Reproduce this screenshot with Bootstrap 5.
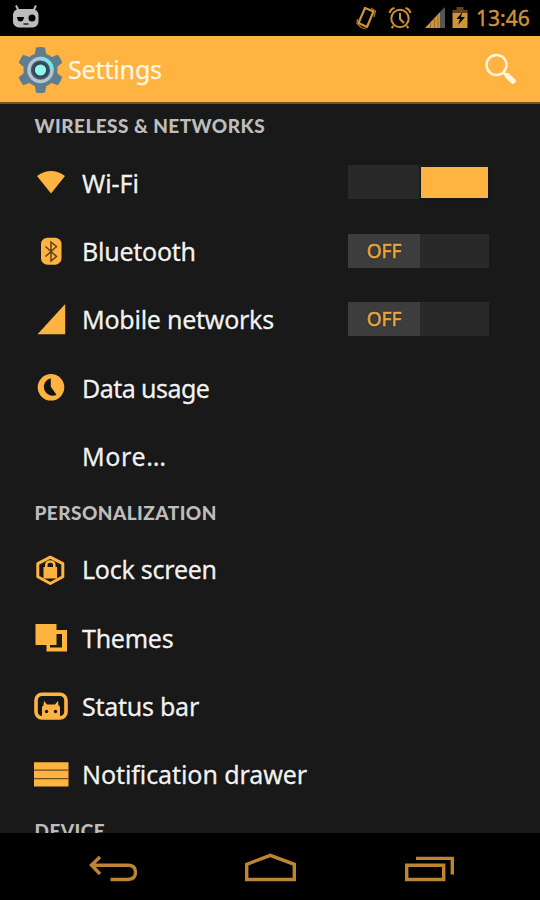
<!DOCTYPE html>
<html lang="en">
<head>
<meta charset="utf-8">
<meta name="viewport" content="width=device-width, initial-scale=1">
<title>Settings</title>
<link href="https://cdn.jsdelivr.net/npm/bootstrap@5.3.0/dist/css/bootstrap.min.css" rel="stylesheet">
<style>
:root { --amber: #ffb340; --dim: #bd8434; }
body { font-family: "Noto Sans", "Open Sans", sans-serif; background: #191919; height: 900px; overflow: hidden; }
svg { display: block; flex: none; overflow: visible; }
.status { height: 36px; background: #000; color: #cf9339; padding: 0 9px 0 12px; }
.status-icons { width: 120px; height: 36px; }
.clock { font-size: 21px; line-height: 37px; width: 55px; -webkit-text-stroke: .4px; }
.topbar { height: 68px; background: var(--amber); border-bottom: 2px solid #79531b; padding: 0 24px 0 19px; }
.title { font-size: 25px; line-height: 66px; color: #fff5e2; margin-left: 6px; letter-spacing: -.15px; -webkit-text-stroke: .25px; }
.gear { margin-top: 2px; }
.settings { height: 729px; }
.section-title { font-family: Lato, sans-serif; font-weight: 900; font-size: 19px; letter-spacing: .45px; line-height: 44.3px; height: 45.3px; color: #bdbdbd; padding-left: 34.5px; white-space: nowrap; }
.item { height: 68.25px; padding: 0 51px 0 34px; color: #f1f1f1; font-size: 25px; line-height: 34px; white-space: nowrap; text-shadow: 0 0 2px #000; letter-spacing: -.25px; -webkit-text-stroke: .3px; }
.item > span { margin-top: -1px; }
.item svg { width: 34px; height: 34px; margin-right: 14px; fill: var(--amber); }
.ls-data { letter-spacing: -.55px; }
.ls-more { letter-spacing: .6px; }
.ls-none { letter-spacing: -.08px; }
.switch { width: 141px; height: 34px; background: #292929; margin-top: -2px; }
.knob { width: 72px; height: 34px; background: #3d3d3d; color: #e5a540; font-size: 19px; line-height: 35px; letter-spacing: 0; -webkit-text-stroke: .6px; }
.knob-on { width: 67px; height: 31px; background: var(--amber); margin-right: 1px; box-shadow: 0 0 2px 1px #101010; }
.navkeys { height: 67px; background: #000; }
.navkeys svg { fill: none; stroke: var(--dim); stroke-width: 3.4; }
</style>
<script src="https://cdn.jsdelivr.net/npm/bootstrap@5.3.0/dist/js/bootstrap.bundle.min.js"></script>
</head>
<body class="d-flex flex-column">

<div class="status d-flex align-items-center justify-content-between">
  <svg width="28" height="36" viewBox="0 0 28 36">
    <path d="M4 5.500l2.500 5M24 5.500l-2.500 5" stroke="#bcbcbc" stroke-width="2"/>
    <rect x="1" y="9" width="25.500" height="18.500" rx="6" fill="#bcbcbc"/>
    <path d="M5 17h7q-.5 4.500-3.500 4.500T5 17z"/><circle cx="20" cy="18" r="3.500"/>
    <path d="M11.500 24h5" stroke="#222" stroke-width="1.500"/>
  </svg>
  <div class="d-flex align-items-center">
    <svg class="status-icons" viewBox="356 0 120 36" fill="none" stroke="#cf9339">
      <path d="M365 8l8.500 3.500L367 27l-8.500-4z" stroke-width="2.200" stroke-linejoin="round"/>
      <path d="M371 8l4.500 3-1.500 6M357.500 19l-.5 4.500 4 4 5 1.500" stroke-width="1.300" opacity=".75"/>
      <circle cx="400" cy="18.500" r="8.700" stroke-width="2"/>
      <path d="M400 13v6l4 4M389.500 13q1-4 5-5M410.500 13q-1-4-5-5M393.500 26l-2 2M406.500 26l2 2" stroke-width="2"/>
      <path d="M425 28L440 12v16z" fill="#cf9339" stroke="none"/>
      <path d="M430.500 23v5M434.500 19v9M438 14v14" stroke="#8a6229" stroke-width=".8"/>
      <path d="M440 12l5-5v21h-5z" fill="#555" stroke="none"/>
      <path d="M452.500 10h4V7h7v3h4v4h-15z" fill="#61421a" stroke="none"/>
      <path d="M452.500 13h15v15h-15z" fill="#cf9339" stroke="none"/>
      <path d="M462.500 12l-6 7h3.500l-2 6 7-8h-4z" fill="#000" stroke="none"/>
    </svg>
    <span class="clock">13:46</span>
  </div>
</div>

<header class="topbar d-flex align-items-center">
  <svg class="gear" width="43" height="48" viewBox="-21.500 -24 43 48">
    <g fill="#5f7d8e">
      <circle r="17"/>
      <path id="tooth" d="M-6-14l1.500-8.500q4.500-1 9 0L6-14V14L4.500 22.500q-4.500 1-9 0L-6 14z"/>
      <use href="#tooth" transform="rotate(60)"/><use href="#tooth" transform="rotate(-60)"/>
    </g>
    <circle r="11.500" fill="#47596b" stroke="#b4c4d0" stroke-width="3.500"/>
    <path d="M0-11.500A11.500 11.500 0 0 1 11.500 0" fill="none" stroke="#78e4e4" stroke-width="3.500"/>
    <circle r="8.300" fill="#33465a"/>
    <circle r="5.600" fill="#8ff8eb"/>
  </svg>
  <h1 class="title mb-0 fw-normal">Settings</h1>
  <svg class="ms-auto" width="31" height="66" viewBox="485 36 31 66" fill="none" stroke="#fff4df" stroke-linecap="round">
    <circle cx="496.500" cy="65" r="10" stroke-width="2.500"/>
    <path d="M504 73l2 2" stroke-width="3"/><path d="M507.500 76l5.500 5" stroke-width="5.500"/>
  </svg>
</header>

<main class="settings overflow-hidden">
  <h2 class="section-title mb-0">WIRELESS &amp; NETWORKS</h2>
  <div class="item d-flex align-items-center">
    <svg viewBox="0 0 34 34"><path d="M3 10q14-10 28 0L17 27.500z"/></svg>
    <span class="ls-none">Wi-Fi</span>
    <div class="switch ms-auto d-flex align-items-center justify-content-end"><div class="knob-on"></div></div>
  </div>
  <div class="item d-flex align-items-center">
    <svg viewBox="0 0 34 34"><rect x="7" y="2.700" width="20.500" height="27" rx="6.500"/><path d="M11.500 11.500l11 10-5.500 4.500V7l5.500 4.500-11 10" fill="none" stroke="#5d4320" stroke-width="1.500"/></svg>
    <span>Bluetooth</span>
    <div class="switch ms-auto"><div class="knob text-center">OFF</div></div>
  </div>
  <div class="item d-flex align-items-center">
    <svg viewBox="0 0 34 34"><path d="M3.500 31.300L31.200 1v30.300z"/></svg>
    <span>Mobile networks</span>
    <div class="switch ms-auto"><div class="knob text-center">OFF</div></div>
  </div>
  <div class="item d-flex align-items-center">
    <svg viewBox="0 0 34 34"><circle cx="17" cy="16.300" r="13.300"/><path d="M16.800 7.300v8.500l5.700 8A8.800 8.800 0 1 1 16.800 7.300z" fill="#141414"/></svg>
    <span class="ls-data">Data usage</span>
  </div>
  <div class="item d-flex align-items-center">
    <svg viewBox="0 0 34 34"></svg>
    <span class="ls-more">More…</span>
  </div>

  <h2 class="section-title mb-0">PERSONALIZATION</h2>
  <div class="item d-flex align-items-center">
    <svg viewBox="0 0 34 34"><path d="M16.300 4.200l12.500 6.500v13L16.300 30.500 3.800 23.700v-13z" fill="none" stroke="#ffb340" stroke-width="3" stroke-linejoin="round"/><path d="M9.500 14h13.600v11.500H9.500z"/><path d="M12.300 15v-3q0-3.500 4-3.500t4 3.500v3" fill="none" stroke="#ffb340" stroke-width="2.600"/></svg>
    <span>Lock screen</span>
  </div>
  <div class="item d-flex align-items-center">
    <svg viewBox="0 0 34 34"><path d="M1.500 3h21v6H33v21.500H12.500V24h-11zM22.500 13v11H16v2.500h12V13z" fill-rule="evenodd"/></svg>
    <span>Themes</span>
  </div>
  <div class="item d-flex align-items-center">
    <svg viewBox="0 0 34 34"><rect x="2" y="5.200" width="30" height="23.700" rx="6" fill="none" stroke="#ffb340" stroke-width="3.600"/><path d="M8 28v-9.500q0-1.500 1.500-2l.5-4.500 3 3.500h8l3-3.500.5 4.500q1.500.5 1.500 2V28z"/><path d="M6.500 22V9.500h21V22" fill="none" stroke="#141414" stroke-width="2"/><circle cx="12.500" cy="22.500" r="1.700" fill="#141414"/><circle cx="21.500" cy="22.500" r="1.700" fill="#141414"/></svg>
    <span>Status bar</span>
  </div>
  <div class="item d-flex align-items-center">
    <svg viewBox="0 0 34 34"><path d="M0 4.200h34.500v24.300H0z"/><path d="M0 12.200h34.500M0 20.700h34.500" stroke="#6b4b20" stroke-width="1.300"/></svg>
    <span class="ls-none">Notification drawer</span>
  </div>

  <h2 class="section-title mb-0">DEVICE</h2>
</main>

<nav class="navkeys">
  <svg width="540" height="67" viewBox="0 833 540 67">
    <path d="M100 857l-8.500 8 8.500 9M92 865.300h36q7.500 0 7.500 7t-7.500 7.200h-17.500"/>
    <path d="M246.700 864.300l23.600-9 24 9v15.200h-47.600z"/>
    <path d="M406.700 865.300h37v14.200h-37zM416 858.400h36.300v16"/>
  </svg>
</nav>
</body>
</html>
